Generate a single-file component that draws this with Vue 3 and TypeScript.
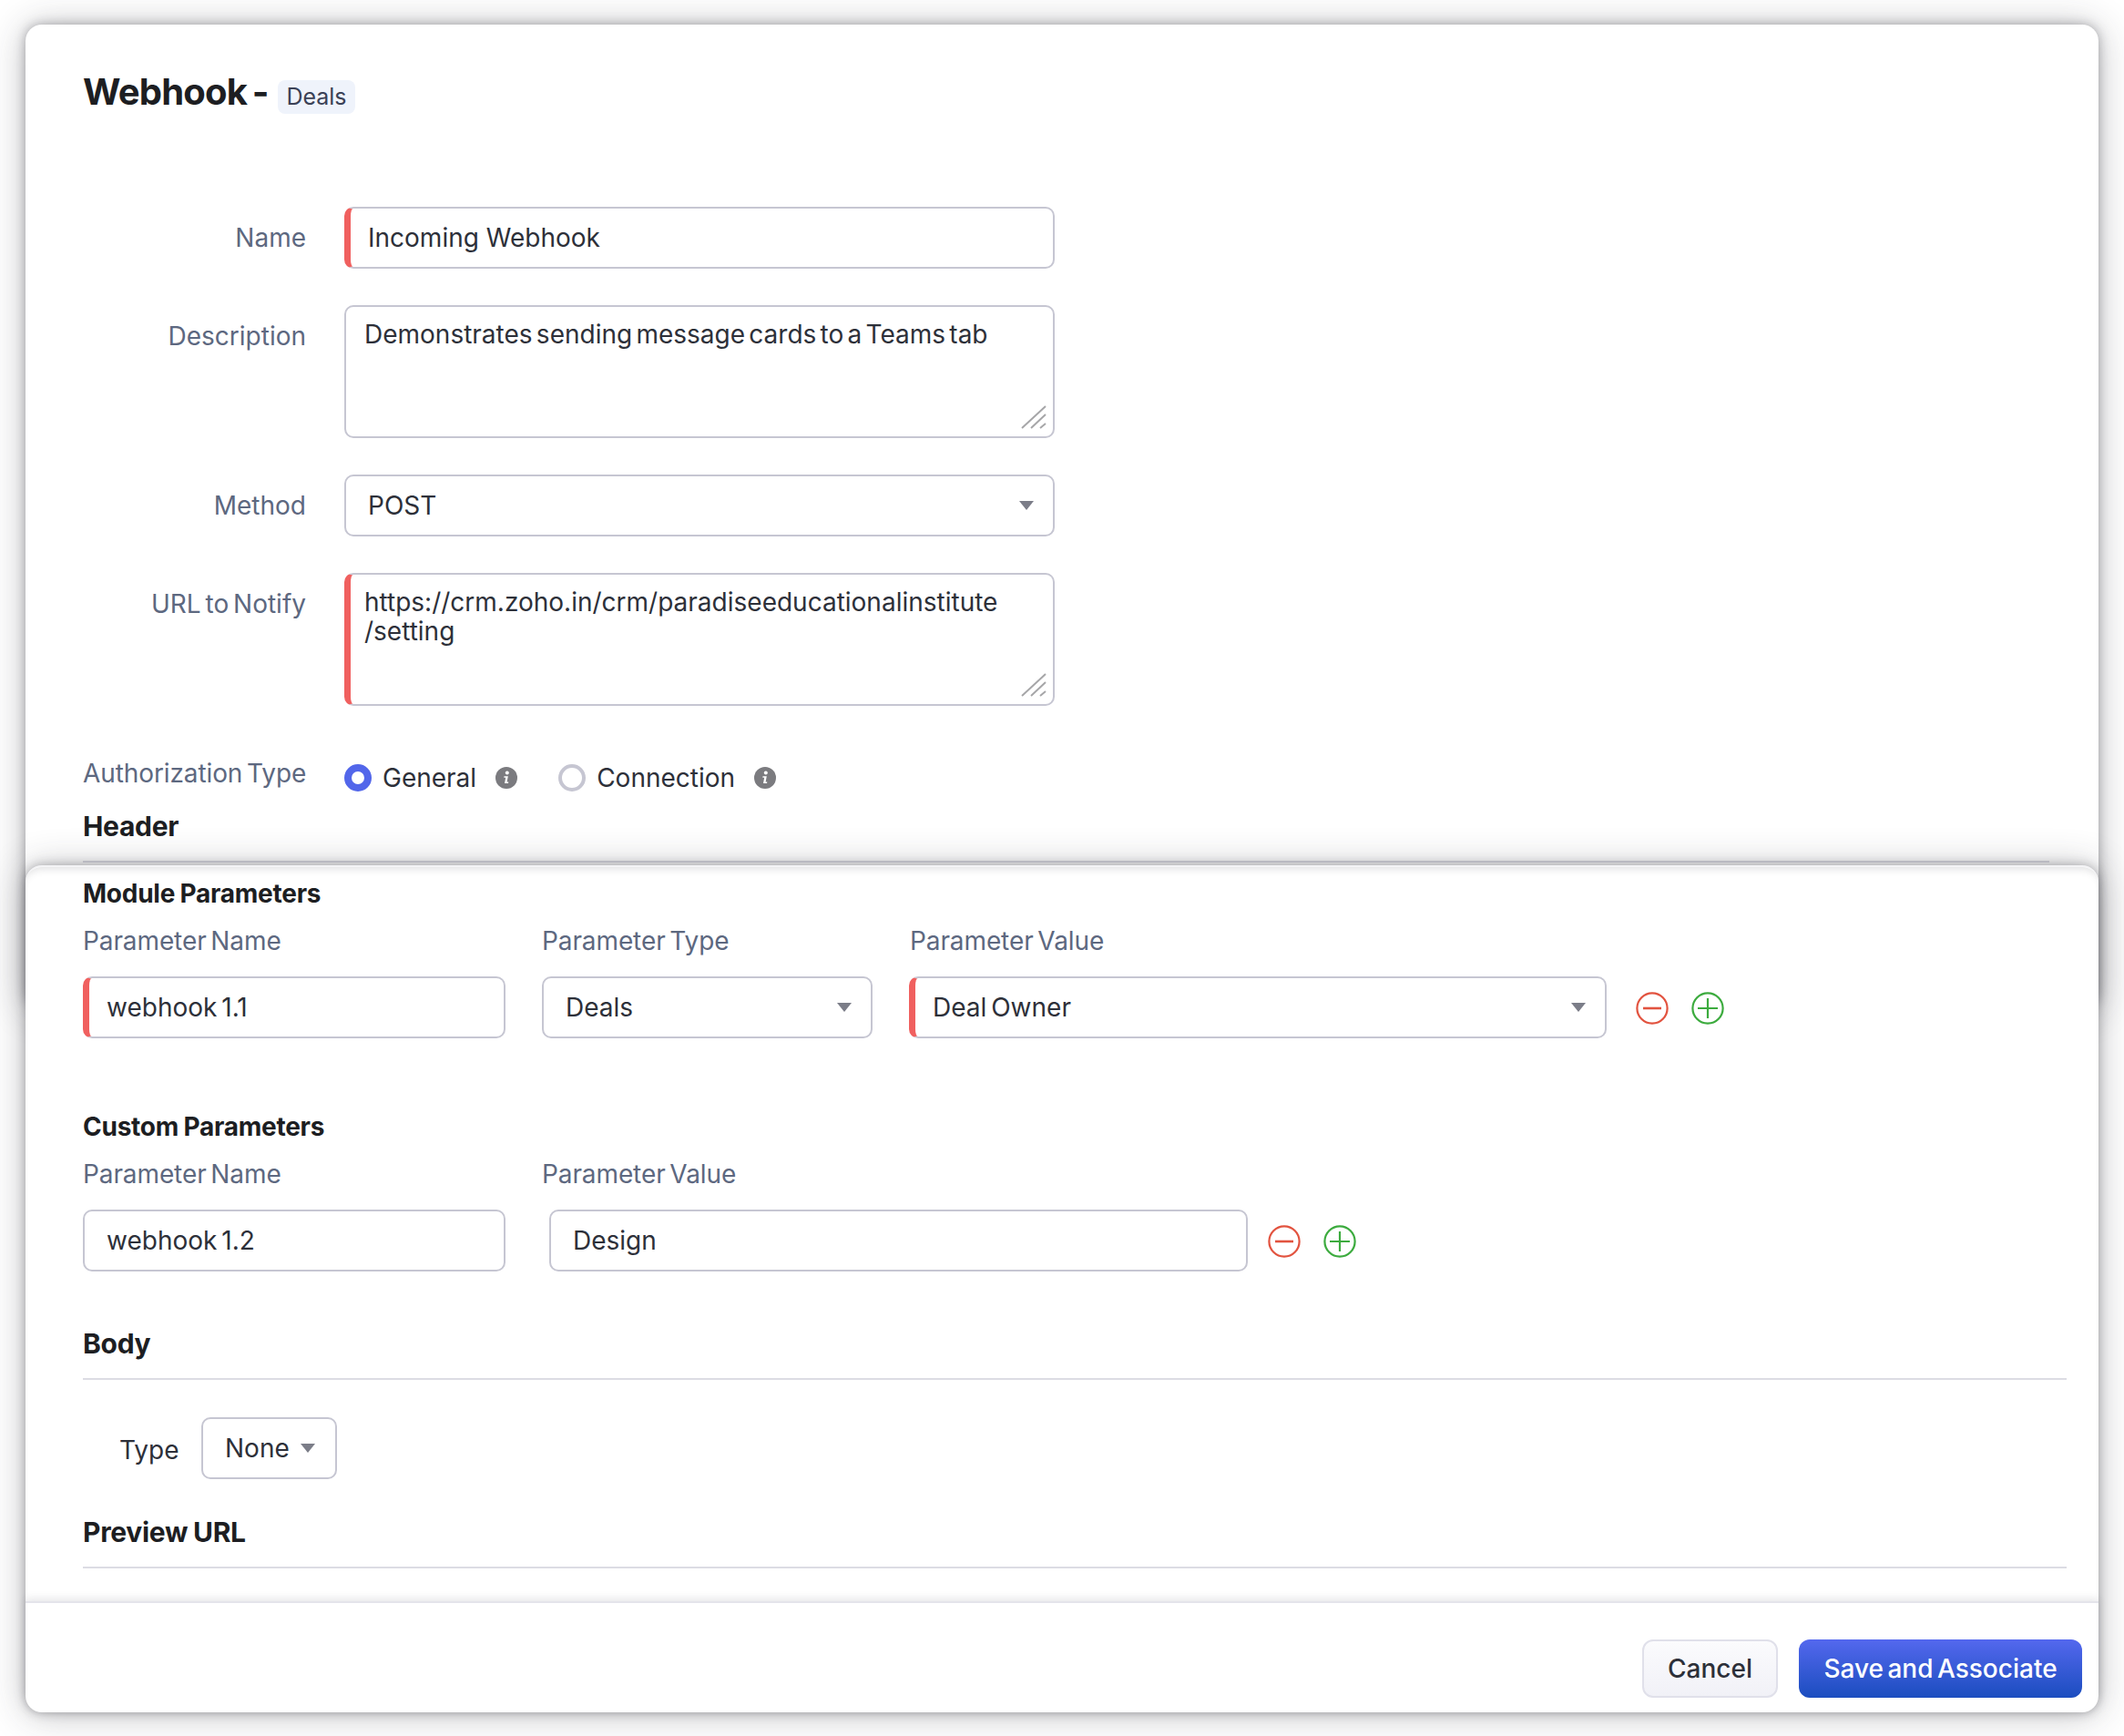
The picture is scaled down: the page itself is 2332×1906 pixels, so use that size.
<script setup lang="ts">
interface Row {
  label: string
  value: string
  kind: 'input' | 'area' | 'select'
  required?: boolean
}

const topRows: Row[] = [
  { label: 'Name', value: 'Incoming Webhook', kind: 'input', required: true },
  { label: 'Description', value: 'Demonstrates sending message cards to a Teams tab', kind: 'area' },
  { label: 'Method', value: 'POST', kind: 'select' },
  { label: 'URL to Notify', value: 'https://crm.zoho.in/crm/paradiseeducationalinstitute\n/setting', kind: 'area', required: true },
]
</script>

<template>
  <div class="page">
    <section class="panel top-panel">
      <h1 class="title">Webhook - <span class="tag">Deals</span></h1>

      <div class="form">
        <div v-for="row in topRows" :key="row.label" class="form-row" :class="row.kind">
          <label class="form-label">{{ row.label }}</label>
          <div class="field" :class="[row.kind, { required: row.required }]">
            <span class="value">{{ row.value }}</span>
            <span v-if="row.kind === 'select'" class="caret"></span>
            <svg v-if="row.kind === 'area'" class="grip" width="28" height="26" viewBox="0 0 28 26">
              <path d="M1 25 L27 1 M11 25 L27 10 M21 25 L27 20" stroke="#a6a6a8" stroke-width="2" fill="none" />
            </svg>
          </div>
        </div>
      </div>

      <div class="auth-row">
        <span class="auth-label">Authorization Type</span>
        <span class="radio on"></span>
        <span class="radio-text">General</span>
        <svg class="info" width="24" height="24" viewBox="0 0 24 24">
          <circle cx="12" cy="12" r="12" fill="#7b7b7f" />
          <circle cx="12.8" cy="6.6" r="2" fill="#fff" />
          <path d="M9.5 10.3 H13.8 L12.6 16.6 H14.4 L14 18 H10 L11.2 11.7 H9.3 Z" fill="#fff" />
        </svg>
        <span class="radio second"></span>
        <span class="radio-text">Connection</span>
        <svg class="info" width="24" height="24" viewBox="0 0 24 24">
          <circle cx="12" cy="12" r="12" fill="#7b7b7f" />
          <circle cx="12.8" cy="6.6" r="2" fill="#fff" />
          <path d="M9.5 10.3 H13.8 L12.6 16.6 H14.4 L14 18 H10 L11.2 11.7 H9.3 Z" fill="#fff" />
        </svg>
      </div>

      <h2 class="section-head header-head">Header</h2>
      <div class="rule header-rule"></div>
    </section>

    <section class="panel bottom-panel">
      <div class="scroll-area">
        <h3 class="sub-head">Module Parameters</h3>
        <div class="param-labels">
          <span class="w-name">Parameter Name</span>
          <span class="w-type">Parameter Type</span>
          <span>Parameter Value</span>
        </div>
        <div class="param-row">
          <div class="field input required w-name"><span class="value">webhook 1.1</span></div>
          <div class="field select w-type"><span class="value">Deals</span><span class="caret"></span></div>
          <div class="field select required w-value"><span class="value">Deal Owner</span><span class="caret"></span></div>
          <div class="actions">
            <svg width="36" height="36" viewBox="0 0 36 36"><circle cx="18" cy="18" r="16.6" fill="none" stroke="#e2533f" stroke-width="2.2" /><path d="M8 18 H28" stroke="#e2533f" stroke-width="2.6" /></svg>
            <svg width="36" height="36" viewBox="0 0 36 36"><circle cx="18" cy="18" r="16.6" fill="none" stroke="#3cab3e" stroke-width="2.2" /><path d="M7 18 H29 M18 7 V29" stroke="#3cab3e" stroke-width="2.2" /></svg>
          </div>
        </div>

        <h3 class="sub-head custom-head">Custom Parameters</h3>
        <div class="param-labels">
          <span class="w-name">Parameter Name</span>
          <span>Parameter Value</span>
        </div>
        <div class="param-row custom-row">
          <div class="field input w-name"><span class="value">webhook 1.2</span></div>
          <div class="field input w-design"><span class="value">Design</span></div>
          <div class="actions">
            <svg width="36" height="36" viewBox="0 0 36 36"><circle cx="18" cy="18" r="16.6" fill="none" stroke="#e2533f" stroke-width="2.2" /><path d="M8 18 H28" stroke="#e2533f" stroke-width="2.6" /></svg>
            <svg width="36" height="36" viewBox="0 0 36 36"><circle cx="18" cy="18" r="16.6" fill="none" stroke="#3cab3e" stroke-width="2.2" /><path d="M7 18 H29 M18 7 V29" stroke="#3cab3e" stroke-width="2.2" /></svg>
          </div>
        </div>

        <h2 class="section-head body-head">Body</h2>
        <div class="rule"></div>
        <div class="type-row">
          <span class="type-label">Type</span>
          <div class="field select none-select"><span class="value">None</span><span class="caret"></span></div>
        </div>
        <h2 class="section-head preview-head">Preview URL</h2>
        <div class="rule"></div>
      </div>

      <footer class="footer">
        <button class="btn cancel">Cancel</button>
        <button class="btn save">Save and Associate</button>
      </footer>
    </section>
  </div>
</template>

<style>
html,
body {
  margin: 0;
  background: #fff;
}
</style>

<style scoped>
.page {
  width: 2332px;
  height: 1906px;
  box-sizing: border-box;
  padding: 27px 28px 0;
  font-family: Inter, "Noto Sans", sans-serif;
  word-spacing: -3px;
  color: #2d3039;
  overflow: hidden;
}

.panel {
  background: #fff;
  border-radius: 18px;
  box-shadow: 0 0 12px rgba(40, 40, 50, 0.34), 0 2px 40px rgba(40, 40, 50, 0.3);
}

.top-panel {
  box-sizing: border-box;
  height: 1080px;
  padding: 0 35px 0 63px;
  display: flow-root;
}

.bottom-panel {
  position: relative;
  box-sizing: border-box;
  margin-top: -157px;
  height: 930px;
  display: flex;
  flex-direction: column;
  border-top: 2px solid #f4f4f6;
  box-shadow: 0 0 12px rgba(40, 40, 50, 0.34), 0 2px 40px rgba(40, 40, 50, 0.3),
    inset 0 7px 8px -5px rgba(60, 60, 70, 0.16);
}

.title {
  margin: 49px 0 0;
  font-size: 40px;
  line-height: 50px;
  font-weight: 700;
  letter-spacing: -0.8px;
  color: #1d1e22;
}

.tag {
  display: inline-block;
  font-size: 25px;
  font-weight: 400;
  letter-spacing: 0;
  line-height: 37px;
  padding: 0 9px;
  margin-left: 5px;
  background: #eff3fb;
  border-radius: 8px;
  color: #3a4156;
  vertical-align: 0;
}

.form {
  margin-top: 101px;
  display: flex;
  flex-direction: column;
  gap: 40px;
}

.form-row {
  display: flex;
  gap: 42px;
}

.form-label {
  width: 245px;
  text-align: right;
  font-size: 28px;
  line-height: 34px;
  padding-top: 17px;
  color: #5d6880;
}

.field {
  position: relative;
  box-sizing: border-box;
  border: 2px solid #c6c6d2;
  border-radius: 10px;
  background: #fff;
  font-size: 28px;
  line-height: 32px;
  display: flex;
  align-items: center;
  padding: 0 24px;
  height: 68px;
}

.form .field {
  width: 780px;
}

.form .field.input {
  word-spacing: 0;
}

.field.area {
  height: 146px;
  align-items: flex-start;
  padding: 14px 20px;
  white-space: pre-line;
  word-spacing: -3.6px;
}

.field.required {
  border-left: 7px solid #f0605f;
  padding-left: 19px;
}

.field.area.required {
  padding-left: 15px;
}

.caret {
  position: absolute;
  right: 21px;
  top: 50%;
  margin-top: -5px;
  width: 0;
  height: 0;
  border-left: 8px solid transparent;
  border-right: 8px solid transparent;
  border-top: 10px solid #7b7d88;
}

.grip {
  position: absolute;
  right: 7px;
  bottom: 8px;
}

.auth-row {
  display: flex;
  align-items: center;
  margin-top: 61px;
  height: 36px;
  font-size: 28px;
}

.auth-label {
  width: 287px;
  color: #5d6880;
  letter-spacing: -0.1px;
  position: relative;
  top: -5px;
}

.radio {
  box-sizing: border-box;
  width: 30px;
  height: 30px;
  border-radius: 50%;
  border: 4px solid #c6c6d2;
  flex: none;
}

.radio.on {
  border: 8px solid #5266ea;
}

.radio.second {
  margin-left: 45px;
}

.radio-text {
  margin-left: 12px;
  color: #2d3039;
}

.info {
  margin-left: 21px;
  flex: none;
}

.section-head {
  margin: 0;
  font-size: 30px;
  line-height: 36px;
  font-weight: 700;
  letter-spacing: -0.3px;
  word-spacing: -1px;
  color: #1d1e22;
}

.header-head {
  margin-top: 17px;
}

.rule {
  height: 2px;
  background: #dcdce4;
  margin-top: 20px;
}

.header-rule {
  margin-right: 19px;
}

.scroll-area {
  flex: 1;
  padding: 0 35px 0 63px;
}

.sub-head {
  margin: 12px 0 0;
  font-size: 28px;
  line-height: 34px;
  font-weight: 700;
  letter-spacing: -0.25px;
  word-spacing: -1px;
  color: #1d1e22;
}

.custom-head {
  margin-top: 80px;
}

.param-labels {
  display: flex;
  margin-top: 18px;
  font-size: 28px;
  line-height: 34px;
  letter-spacing: -0.1px;
  color: #5d6880;
}

.param-labels .w-name {
  width: 504px;
}

.param-labels .w-type {
  width: 404px;
}

.param-row {
  display: flex;
  align-items: center;
  margin-top: 22px;
  gap: 40px;
}

.custom-row {
  gap: 48px;
}

.w-name.field {
  width: 464px;
}

.w-type.field {
  width: 363px;
}

.w-value {
  width: 766px;
}

.w-design {
  width: 767px;
  margin-right: -18px;
}

.actions {
  display: flex;
  gap: 25px;
  margin-left: -8px;
  margin-top: 2px;
}

.body-head {
  margin-top: 61px;
}

.type-row {
  display: flex;
  align-items: center;
  margin-top: 41px;
}

.type-label {
  width: 130px;
  box-sizing: border-box;
  padding-left: 40px;
  font-size: 28px;
  position: relative;
  top: 2px;
}

.none-select {
  width: 149px;
  padding-right: 0;
}

.none-select .caret {
  right: 22px;
}

.preview-head {
  margin-top: 40px;
}

.footer {
  height: 122px;
  box-sizing: border-box;
  border-top: 2px solid #e4e4ea;
  box-shadow: 0 -3px 8px rgba(60, 60, 70, 0.12);
  display: flex;
  justify-content: flex-end;
  align-items: flex-start;
  gap: 23px;
  padding: 40px 18px 0 0;
  border-radius: 0 0 18px 18px;
}

.btn {
  height: 64px;
  border-radius: 12px;
  font-family: inherit;
  font-size: 28px;
  font-weight: 500;
  word-spacing: -3px;
}

.cancel {
  width: 149px;
  border: 2px solid #e0e0ea;
  background: linear-gradient(#fbfbfd, #f1f1f7);
  color: #2d3039;
}

.save {
  width: 311px;
  border: none;
  background: linear-gradient(#5468ee, #1b4dbf);
  color: #fff;
}
</style>
